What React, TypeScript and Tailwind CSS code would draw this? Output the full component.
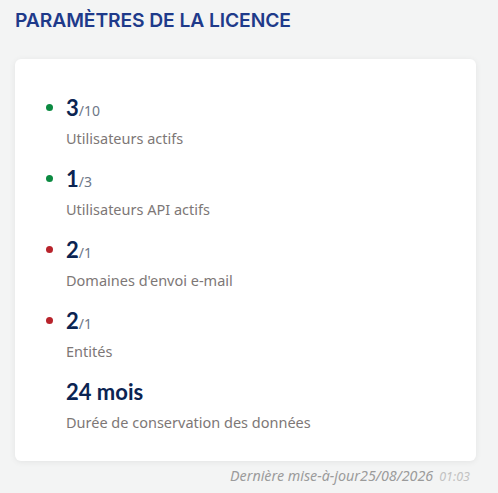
import React from "react";

type Stat = {
  value: string;
  max?: string;
  label: string;
  status?: "ok" | "over";
};

const stats: Stat[] = [
  { value: "3", max: "/10", label: "Utilisateurs actifs", status: "ok" },
  { value: "1", max: "/3", label: "Utilisateurs API actifs", status: "ok" },
  { value: "2", max: "/1", label: "Domaines d'envoi e-mail", status: "over" },
  { value: "2", max: "/1", label: "Entités", status: "over" },
  { value: "24 mois", label: "Durée de conservation des données" },
];

function StatRow({ stat }: { stat: Stat }) {
  return (
    <div className="relative pl-[20px]">
      {stat.status && (
        <span
          className={
            stat.status === "ok"
              ? "absolute left-0 top-[10px] w-[7px] h-[7px] rounded-full bg-[#0b8a41]"
              : "absolute left-0 top-[10px] w-[7px] h-[7px] rounded-full bg-[#b8232b]"
          }
        />
      )}
      <div className="h-[28px] leading-[28px]">
        <span className="text-[22px] font-bold text-[#0b2452]">{stat.value}</span>
        {stat.max && <span className="font-['Noto_Sans',sans-serif] text-[14px] text-[#6e7788]">{stat.max}</span>}
      </div>
      <div className="mt-[6px] h-[20px] font-['Noto_Sans',sans-serif] text-[14.5px] leading-[20px] text-[#7d7776]">{stat.label}</div>
    </div>
  );
}

export default function App() {
  return (
    <div className="min-h-screen bg-[#f3f4f4] px-[15px] pt-[6px] font-['Lato','Noto_Sans',sans-serif]">
      <h1 className="font-['Inter',sans-serif] text-[19.3px] leading-[28px] font-semibold text-[#1e3a8a] tracking-[-0.1px]">
        PARAMÈTRES DE LA LICENCE
      </h1>
      <div className="mt-[25px] w-[461px] rounded-md bg-white shadow-[0_1px_6px_rgba(0,0,0,0.07)] pl-[31px] pt-[35px] pb-[29px] flex flex-col gap-[17px]">
        {stats.map((s, i) => (
          <StatRow key={i} stat={s} />
        ))}
      </div>
      <div className="flex justify-end items-baseline gap-[6px] w-[461px] pr-[6px] mt-[4px]">
        <span className="italic font-['Noto_Sans',sans-serif] text-[14.3px] text-[#9b9b9b]">Dernière mise-à-jour25/08/2026</span>
        <span className="italic font-['Noto_Sans',sans-serif] text-[12.5px] text-[#c2c2c2]">01:03</span>
      </div>
    </div>
  );
}
